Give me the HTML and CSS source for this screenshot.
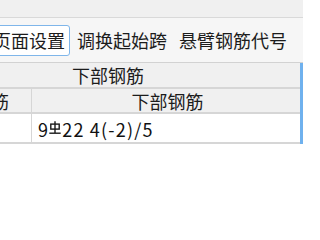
FILE: index.html
```html
<!DOCTYPE html>
<html lang="zh-CN">
<head>
<meta charset="utf-8">
<link rel="stylesheet" href="styles.css">
</head>
<body>
<div class="page">
  <div class="topband"></div>
  <div class="toolbar">
    <div class="btn">页面设置</div>
    <div class="tool">调换起始跨</div>
    <div class="tool tool-last">悬臂钢筋代号</div>
  </div>
  <div class="table">
    <div class="row head1">
      <div class="cell span">下部钢筋</div>
    </div>
    <div class="row head2">
      <div class="cell c1">下部钢筋</div>
      <div class="cell c2">下部钢筋</div>
    </div>
    <div class="row data">
      <div class="cell c1"></div>
      <div class="cell c2 val">9<svg class="rebar" width="12" height="14" viewBox="0 0 12 14"><rect x="1.8" y="3.1" width="8.4" height="5" fill="none" stroke="#1a1a1a" stroke-width="1.4"/><line x1="6" y1="0.3" x2="6" y2="12" stroke="#1a1a1a" stroke-width="1.4"/><line x1="0.3" y1="12.2" x2="11.7" y2="12.2" stroke="#1a1a1a" stroke-width="1.4"/></svg>22 4(-2)/5</div>
    </div>
    <div class="focusbar"></div>
  </div>
</div>
</body>
</html>
```
FILE: styles.css
```css
html, body {
  margin: 0;
  padding: 0;
  background: #ffffff;
}
.page {
  width: 303px;
  height: 216px;
  overflow: hidden;
  font-family: "Noto Sans CJK SC", "Noto Sans", sans-serif;
  font-size: 18px;
  color: #1c1c1c;
  background: #ffffff;
}
.topband {
  height: 17px;
  background: #f0f0f0;
  border-bottom: 1px solid #d9d9d9;
}
.toolbar {
  height: 44px;
  display: flex;
  align-items: center;
  margin-left: -12px;
  background: #f6f6f6;
  white-space: nowrap;
}
.btn {
  height: 29px;
  line-height: 29px;
  padding: 0 4px;
  border: 1px solid #7fb6ea;
  border-radius: 3px;
  background: #ffffff;
}
.tool {
  margin-left: 7px;
  line-height: 29px;
}
.tool-last {
  margin-left: 12px;
}
.table {
  position: relative;
  border-top: 1px solid #d2d2d2;
  margin-left: -60px;
  width: 363px;
}
.row {
  display: flex;
  border-bottom: 2px solid #d6d6d6;
  white-space: nowrap;
}
.head1 {
  height: 24px;
  background: #f0f0f0;
}
.head2 {
  height: 23px;
  background: #f0f0f0;
}
.data {
  height: 28px;
  background: #ffffff;
}
.cell {
  display: flex;
  align-items: center;
  line-height: 20px;
}
.span {
  padding-left: 132px;
}
.c1 {
  width: 91px;
  justify-content: center;
  border-right: 1px solid #d6d6d6;
}
.head2 .c1 {
  justify-content: flex-end;
  padding-right: 22px;
  width: 69px;
}
.c2 {
  flex: 1;
  justify-content: center;
}
.val {
  justify-content: flex-start;
  padding-left: 6px;
  color: #111111;
  padding-top: 1px;
  letter-spacing: 1.2px;
}
.rebar {
  margin: 0 1px 1px 0;
}
.focusbar {
  position: absolute;
  right: 0;
  top: 0;
  bottom: 0;
  width: 3px;
  background: #6fb1ee;
}
```
